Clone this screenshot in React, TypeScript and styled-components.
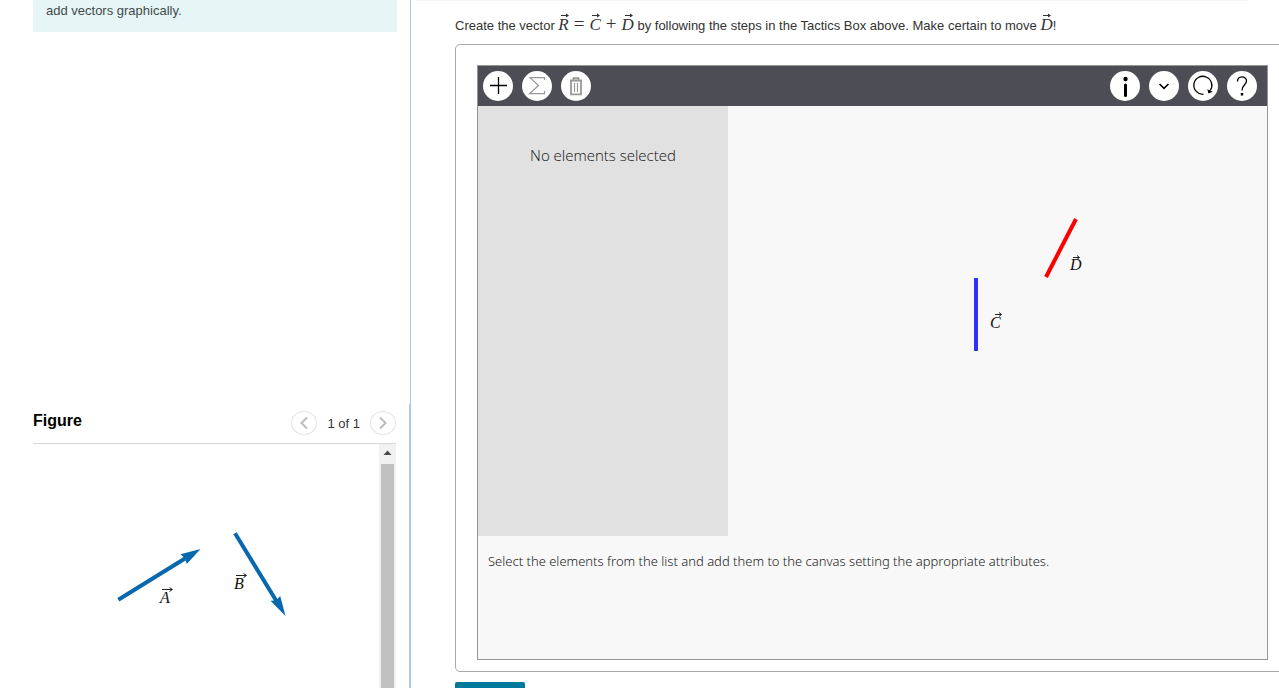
import React from "react";
import styled, { createGlobalStyle } from "styled-components";

const GlobalStyle = createGlobalStyle`
  * { box-sizing: border-box; }
  body {
    margin: 0;
    background: #fff;
    color: #333;
    font: 13px/20px "Liberation Sans", Arial, sans-serif;
  }
`;

const Page = styled.div`
  display: grid;
  grid-template-columns: 411px minmax(0, 1fr);
  height: 100vh;
  overflow: hidden;
`;

const Sidebar = styled.aside`
  display: flex;
  flex-direction: column;
  min-height: 0;
`;

const IntroPane = styled.section`
  height: 404px;
  flex: none;
  padding: 0 13px 0 33px;
  border-right: 1px solid #b3c8de;
`;

const IntroBox = styled.p`
  margin: 0;
  padding: 1px 13px 11px;
  background: #e6f6f6;
  color: #424a4a;
`;

const FigurePane = styled.section`
  flex: 1;
  min-height: 0;
  display: flex;
  flex-direction: column;
  padding: 0 13px 0 33px;
  border-right: 2px solid #b3c8de;
`;

const FigureHeader = styled.header`
  display: flex;
  justify-content: space-between;
  align-items: center;
  height: 40px;
  flex: none;
  border-bottom: 1px solid #d8d8d8;
`;

const FigureTitle = styled.h2`
  margin: 0;
  padding-bottom: 6px;
  font-size: 16px;
  line-height: 20px;
  color: #000;
`;

const Pager = styled.nav`
  display: flex;
  align-items: center;
  gap: 10px;
  padding-bottom: 2px;
`;

const PagerButton = styled.button`
  display: grid;
  place-items: center;
  width: 26px;
  height: 24px;
  padding: 0;
  border: 1px solid #e3e3e3;
  border-radius: 50%;
  background: #fff;
`;

const PagerText = styled.span`
  padding-top: 3px;
`;

const FigureBody = styled.div`
  flex: 1;
  min-height: 0;
  display: flex;
  justify-content: space-between;
  overflow: hidden;
`;

const Scrollbar = styled.div`
  width: 17px;
  flex: none;
  display: flex;
  flex-direction: column;
  align-items: center;
  background: #f1f1f1;
`;

const ScrollArrow = styled.svg`
  flex: none;
  width: 17px;
  height: 20px;
`;

const ScrollThumb = styled.div`
  width: 13px;
  flex: 1;
  background: #c1c1c1;
`;

const Main = styled.main`
  display: flex;
  flex-direction: column;
  align-items: flex-start;
  min-width: 0;
  padding-left: 44px;
`;

const Divider = styled.hr`
  align-self: stretch;
  flex: none;
  height: 1px;
  margin: 0 31px 0 -40px;
  border: 0;
  background: #f4f4f4;
`;

const Prompt = styled.p`
  flex: none;
  height: 43px;
  margin: 0;
  padding-top: 13px;
  white-space: nowrap;
`;

const MathText = styled.span`
  font: italic 17px/20px "Liberation Serif", "Times New Roman", serif;
`;

const Operator = styled.span`
  padding: 0 5px;
  font-size: 19px;
  font-style: normal;
`;

const VectorBox = styled.span`
  position: relative;
  display: inline-block;
`;

const VectorArrow = styled.svg`
  position: absolute;
  top: -2px;
  left: 3px;
  width: 8px;
  height: 5px;
`;

const AppFrame = styled.div`
  align-self: stretch;
  flex: none;
  margin-right: -10px;
  padding: 20px 20px 11px 21px;
  border: 1px solid #a9a9a9;
  border-radius: 5px;
`;

const Applet = styled.div`
  border: 1px solid #959595;
  background: #f8f8f8;
`;

const Toolbar = styled.div`
  display: flex;
  align-items: center;
  justify-content: space-between;
  height: 40px;
  padding: 0 10px 0 5px;
  background: #4d4d55;
`;

const ToolGroup = styled.div`
  display: flex;
  gap: 9px;
`;

const ToolButton = styled.button`
  width: 30px;
  height: 30px;
  padding: 0;
  border: 0;
  border-radius: 50%;
  background: #fff;
  color: #000;

  &:disabled { color: #999; }

  svg {
    display: block;
    width: 30px;
    height: 30px;
    fill: none;
    stroke: currentColor;
  }
`;

const Workspace = styled.div`
  display: flex;
  height: 430px;
`;

const SelectionPanel = styled.div`
  width: 250px;
  flex: none;
  padding-top: 37px;
  background: #e1e1e1;
  text-align: center;
  font: 300 15px/24px "Open Sans", "Noto Sans", sans-serif;
  color: #111;
`;

const Canvas = styled.svg`
  flex: 1;
  min-width: 0;
  height: 430px;
`;

const Hint = styled.p`
  margin: 0;
  padding: 15px 10px 88px;
  font: 300 13px/20px "Noto Sans", "Open Sans", sans-serif;
  color: #222;
`;

const SubmitButton = styled.button`
  flex: none;
  width: 70px;
  height: 32px;
  margin-top: 10px;
  border: 0;
  border-radius: 2px;
  background: #007a9c;
`;

const Label = styled.text`
  font: italic 16px "Liberation Serif", "Times New Roman", serif;
  fill: #111;
`;

function Vector({ name }: { name: string }) {
  return (
    <VectorBox>
      {name}
      <VectorArrow viewBox="0 0 8 5" aria-hidden="true">
        <path d="M0 2.5H6" stroke="#333" />
        <path d="M5 .5L8 2.5L5 4.5Z" fill="#333" />
      </VectorArrow>
    </VectorBox>
  );
}

function FigureDrawing() {
  return (
    <svg width="300" height="244" role="img" aria-label="Vectors A and B">
      <g stroke="#0768ae" strokeWidth="4">
        <path d="M85.300 155.700L154 113.300" />
        <path d="M202 89.300L244 158" />
      </g>
      <g fill="#0768ae">
        <path d="M167.500 105L147.500 110.300L152 114.500L153.800 120Z" />
        <path d="M252.500 172L237.500 156.700L243 156.500L247.200 152Z" />
      </g>
      <Label x="127" y="159">A</Label>
      <Label x="201" y="145">B</Label>
      <g stroke="#222" fill="none">
        <path d="M129 145.500H139M136.500 143.500L139.500 145.500L136.500 147.500" />
        <path d="M203 131.500H213M210.500 129.500L213.500 131.500L210.500 133.500" />
      </g>
    </svg>
  );
}

export default function App() {
  return (
    <>
      <GlobalStyle />
      <Page>
        <Sidebar>
          <IntroPane>
            <IntroBox>add vectors graphically.</IntroBox>
          </IntroPane>
          <FigurePane>
            <FigureHeader>
              <FigureTitle>Figure</FigureTitle>
              <Pager aria-label="Figure pages">
                <PagerButton aria-label="Previous figure">
                  <svg width="10" height="14" fill="none" stroke="#bcbcbc" strokeWidth="2">
                    <path d="M8 1.500L2.500 7L8 12.500" />
                  </svg>
                </PagerButton>
                <PagerText>1 of 1</PagerText>
                <PagerButton aria-label="Next figure">
                  <svg width="10" height="14" fill="none" stroke="#bcbcbc" strokeWidth="2">
                    <path d="M2 1.500L7.500 7L2 12.500" />
                  </svg>
                </PagerButton>
              </Pager>
            </FigureHeader>
            <FigureBody>
              <FigureDrawing />
              <Scrollbar>
                <ScrollArrow viewBox="0 0 17 20" aria-hidden="true">
                  <path d="M4.500 11L8.500 6.500L12.500 11Z" fill="#4b4b4b" />
                </ScrollArrow>
                <ScrollThumb />
              </Scrollbar>
            </FigureBody>
          </FigurePane>
        </Sidebar>

        <Main>
          <Divider />
          <Prompt>
            Create the vector{" "}
            <MathText>
              <Vector name="R" />
              <Operator>=</Operator>
              <Vector name="C" />
              <Operator>+</Operator>
              <Vector name="D" />
            </MathText>{" "}
            by following the steps in the Tactics Box above. Make certain to move{" "}
            <MathText>
              <Vector name="D" />
            </MathText>
            !
          </Prompt>
          <AppFrame>
            <Applet>
              <Toolbar>
                <ToolGroup>
                  <ToolButton aria-label="Add element">
                    <svg viewBox="0 0 30 30">
                      <path d="M7 14.500H24M15.500 6V23" strokeWidth="1.300" />
                    </svg>
                  </ToolButton>
                  <ToolButton aria-label="Sum" disabled>
                    <svg viewBox="0 0 30 30">
                      <path d="M22.500 9V6.700H8L16.500 14.500L7.500 22.700H22.500V20" strokeWidth="1.200" />
                    </svg>
                  </ToolButton>
                  <ToolButton aria-label="Delete" disabled>
                    <svg viewBox="0 0 30 30">
                      <path d="M10 10V23.300H20V10" strokeWidth="1.800" />
                      <path d="M9 9.500H21M12.500 9V7.200H17.500V9" strokeWidth="1.800" />
                      <path d="M13.500 12V21M16.500 12V21" strokeWidth="1.200" />
                    </svg>
                  </ToolButton>
                </ToolGroup>
                <ToolGroup>
                  <ToolButton aria-label="Information">
                    <svg viewBox="0 0 30 30">
                      <circle cx="15.500" cy="8" r="2.200" fill="currentColor" stroke="none" />
                      <path d="M15.500 14V24.500" strokeWidth="3" strokeLinecap="round" />
                    </svg>
                  </ToolButton>
                  <ToolButton aria-label="Expand">
                    <svg viewBox="0 0 30 30">
                      <path d="M10.500 13L15 17.300L19.500 13" strokeWidth="1.600" />
                    </svg>
                  </ToolButton>
                  <ToolButton aria-label="Reset">
                    <svg viewBox="0 0 30 30">
                      <path d="M15.500 23.300A9 9 0 1 1 22.200 19.500" strokeWidth="1.300" />
                      <path d="M19.300 18.200L20.500 22.500L24.700 20.700Z" fill="currentColor" stroke="none" />
                    </svg>
                  </ToolButton>
                  <ToolButton aria-label="Help">
                    <svg viewBox="0 0 30 30">
                      <path d="M10.500 10.500C10.500 4.500 19.500 4.500 19.500 10C19.500 14 15 13.500 15 19.500" strokeWidth="1.300" />
                      <path d="M13.800 22H16.200V24.500H13.800Z" fill="currentColor" stroke="none" />
                    </svg>
                  </ToolButton>
                </ToolGroup>
              </Toolbar>
              <Workspace>
                <SelectionPanel>No elements selected</SelectionPanel>
                <Canvas role="img" aria-label="Canvas with vectors C and D">
                  <path d="M248 172V245" stroke="#3030ff" strokeWidth="4" />
                  <path d="M318 171L348 113" stroke="#f00" strokeWidth="4" />
                  <Label x="262" y="222">C</Label>
                  <Label x="342" y="164">D</Label>
                  <g stroke="#222" fill="none">
                    <path d="M267 208.500H273M271 206.500L273.500 208.500L271 210.500" />
                    <path d="M345 151.500H351M349 149.500L351.500 151.500L349 153.500" />
                  </g>
                </Canvas>
              </Workspace>
              <Hint>
                Select the elements from the list and add them to the canvas setting the appropriate
                attributes.
              </Hint>
            </Applet>
          </AppFrame>
          <SubmitButton aria-label="Submit" />
        </Main>
      </Page>
    </>
  );
}
